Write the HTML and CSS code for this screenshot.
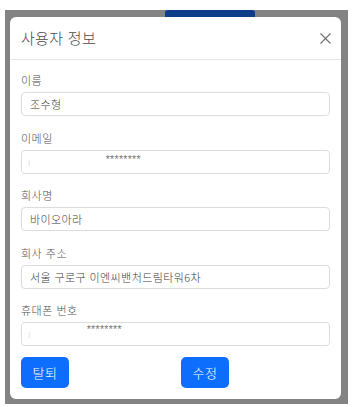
FILE: index.html
```html
<!DOCTYPE html>
<html lang="ko">
<head>
<meta charset="utf-8">
<title>사용자 정보</title>
<link rel="stylesheet" href="styles.css">
</head>
<body>
<div class="stage">
  <div class="backdrop">
    <div class="behind-btn"></div>
    <div class="modal">
      <div class="modal-header">
        <h5 class="modal-title">사용자 정보</h5>
        <button class="close-btn" aria-label="닫기">
          <svg width="11" height="11" viewBox="0 0 11 11"><path d="M0.5 0.5 L10.5 10.5 M10.5 0.5 L0.5 10.5" stroke="#707070" stroke-width="1.1" fill="none"/></svg>
        </button>
      </div>
      <div class="modal-body">
        <div class="field">
          <label class="field-label">이름</label>
          <div class="input">조수형</div>
        </div>
        <div class="field">
          <label class="field-label">이메일</label>
          <div class="input masked"><span class="ghost">ı</span><span class="stars stars-email">********</span></div>
        </div>
        <div class="field">
          <label class="field-label">회사명</label>
          <div class="input">바이오아라</div>
        </div>
        <div class="field">
          <label class="field-label">회사 주소</label>
          <div class="input">서울 구로구 이엔씨밴처드림타워6차</div>
        </div>
        <div class="field">
          <label class="field-label">휴대폰 번호</label>
          <div class="input masked"><span class="ghost">ı</span><span class="stars stars-phone">********</span></div>
        </div>
        <div class="actions">
          <button class="btn">탈퇴</button>
          <button class="btn">수정</button>
        </div>
      </div>
    </div>
  </div>
</div>
</body>
</html>
```

FILE: styles.css
```css
* { box-sizing: border-box; }

html, body {
  margin: 0;
  padding: 0;
  background: #ffffff;
}

body {
  font-family: "Noto Sans CJK KR", "Noto Sans", "Liberation Sans", sans-serif;
  width: 356px;
  height: 407px;
  overflow: hidden;
}

.stage {
  padding: 10px 8px 3px 5px;
}

.backdrop {
  width: 343px;
  height: 394px;
  background-color: #838383;
  display: flex;
  flex-direction: column;
}

.behind-btn {
  width: 90px;
  height: 7px;
  margin-left: 160px;
  background: #0c3d8a;
  border-radius: 3px 3px 0 0;
}

.modal {
  margin-left: 5px;
  width: 331px;
  height: 382px;
  background: #ffffff;
  border-radius: 6px;
  display: flex;
  flex-direction: column;
}

.modal-header {
  height: 43px;
  display: flex;
  align-items: center;
  justify-content: space-between;
  padding: 0 10px 0 11px;
  border-bottom: 1px solid #e6e6e6;
}

.modal-title {
  margin: 0;
  font-size: 15px;
  font-weight: 300;
  color: #4a4a4a;
  line-height: 20px;
  letter-spacing: 0.3px;
}

.close-btn {
  border: 0;
  background: transparent;
  padding: 0;
  width: 11px;
  height: 11px;
  display: flex;
}

.modal-body {
  padding: 12px 11px 11px 11px;
  display: flex;
  flex-direction: column;
  gap: 13.5px;
}

.field {
  display: flex;
  flex-direction: column;
}

.field-label {
  font-size: 11px;
  font-weight: 300;
  line-height: 16px;
  height: 16px;
  color: #505050;
  margin-bottom: 4px;
  letter-spacing: 0.5px;
}

.input {
  height: 24px;
  width: 309px;
  border: 1px solid #dcdcdc;
  border-radius: 4px;
  padding: 0 8px;
  font-size: 11px;
  font-weight: 300;
  line-height: 22px;
  color: #3e3e3e;
  letter-spacing: 0.4px;
  display: flex;
  align-items: center;
  white-space: nowrap;
}

.masked {
  padding-left: 6px;
  align-items: flex-start;
}

.ghost {
  color: #d8d8d8;
  font-size: 10px;
  line-height: 22px;
}

.stars {
  font-family: "Liberation Sans", sans-serif;
  font-size: 10.5px;
  line-height: 16px;
  color: #777777;
  letter-spacing: 0.3px;
}

.stars-email { margin-left: 75px; }
.stars-phone { margin-left: 56px; margin-top: -2px; }

.actions {
  display: flex;
  gap: 112px;
  margin-top: -2.5px;
}

.btn {
  width: 48px;
  height: 31px;
  border: 0;
  border-radius: 5px;
  background: #0d6efd;
  color: #ffffff;
  font-family: "Noto Sans CJK KR", "Noto Sans", sans-serif;
  font-size: 13px;
  font-weight: 300;
  letter-spacing: 0.5px;
  padding: 0;
}
```
